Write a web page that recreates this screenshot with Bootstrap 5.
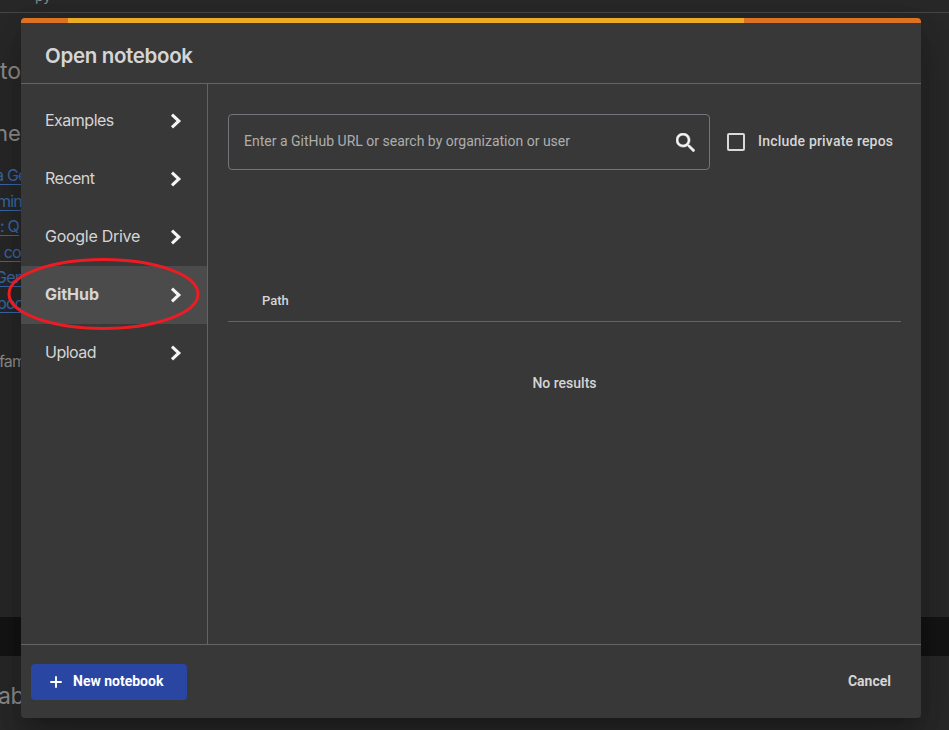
<!DOCTYPE html>
<html lang="en" data-bs-theme="dark">
<head>
<meta charset="utf-8">
<meta name="viewport" content="width=device-width, initial-scale=1">
<title>Open notebook</title>
<link href="https://cdn.jsdelivr.net/npm/bootstrap@5.3.0/dist/css/bootstrap.min.css" rel="stylesheet">
<style>
body{background:#282828;font-family:Roboto,"Liberation Sans",sans-serif;font-size:14px;color:#d5d5d5;height:730px;overflow:hidden}
.g-sans{font-family:Inter,"Open Sans",sans-serif}
/* dimmed page behind the dialog */
.page-behind{width:949px;height:730px;color:#8e8e8e}
.menu-strip{height:13px;border-bottom:1px solid #464646;padding-left:35px;line-height:14px}
.menu-strip span{display:block;margin-top:-11px}
.doc{height:604px}
.doc div,.foot div{white-space:nowrap;width:21px;overflow:hidden}
.doc a{color:#3a68a8;display:block;height:25.6px;line-height:25.6px;font-size:16px;letter-spacing:-.8px;text-decoration:underline;text-underline-offset:3px}
.title-line{font-size:23px;height:34px;line-height:34px;margin-top:41px}
.sub-line{font-size:22px;height:34px;line-height:34px;margin-top:28px;margin-bottom:13px}
.shift-s{text-indent:-3px}
.shift-m{text-indent:-5px}
.para{font-size:16px;line-height:24px;margin-top:32px;letter-spacing:-.8px;text-indent:-1px}
.band{height:39px;background:#141414}
.foot div{font-size:23px;line-height:34px;margin-top:23px;letter-spacing:-.5px;text-indent:-2px}
/* dialog */
.dialog-box{left:21px;top:18px;width:900px;height:700px;background:#383838;border-radius:4px;overflow:hidden}
.dialog-wrap{box-shadow:0 11px 15px -7px rgba(0,0,0,.2),0 24px 38px 3px rgba(0,0,0,.14),0 9px 46px 8px rgba(0,0,0,.12);left:21px;top:18px;width:900px;height:700px;border-radius:4px}
.stripe{height:5px;background:#dc7323}
.stripe i{margin-left:47px;width:676px;background:#edaa25}
.dlg-head{height:61px;border-bottom:1px solid #646464;padding:7px 24px 0}
.dlg-head h1{font-size:20.5px;font-weight:600;letter-spacing:-.33px;color:#d5d5d5}
.dlg-body{height:560px}
.side{width:187px;border-right:1px solid #646464;padding-top:8px}
.side a{height:58px;padding:0 24px;font-size:16px;letter-spacing:-.5px;color:#d5d5d5;text-decoration:none}
.side a.wide{letter-spacing:-.28px}
.side a.current{background:#4b4b4b;font-weight:700;letter-spacing:-.05px}
.side a span{padding-bottom:2px}
.side svg{margin-right:1px}
.main-pane{padding:30px 20px 0}
.search-field{width:482px;height:56px;border:1px solid #73757b;border-radius:4px;padding:0 14px 0 15px;color:#aeaeae}
.search-field span,.tick-label{padding-bottom:2px}
.tick-label{letter-spacing:.2px}
.tick{width:18px;height:18px;border:2px solid #d9d9d9;border-radius:2px;margin:0 13px 0 17px}
.t-head{margin-top:110px;height:42px;padding-left:34px;border-bottom:1px solid #646464;font-size:13px;font-weight:500}
.none{margin-top:51px;font-weight:500;line-height:20px}
.dlg-foot{height:74px;border-top:1px solid #646464;padding:0 30px 0 10px}
.new-btn{width:156px;height:36px;background:#2946a3;border:0;border-radius:4px;color:#fff;font-size:14px;font-weight:700;padding:0 0 0 19px}
.new-btn svg{margin-right:11px}
.ring{left:7px;top:257px}
</style>
<script src="https://cdn.jsdelivr.net/npm/bootstrap@5.3.0/dist/js/bootstrap.bundle.min.js"></script>
</head>
<body>
<div class="page-behind g-sans">
  <div class="menu-strip overflow-hidden"><span>py</span></div>
  <div class="doc overflow-hidden">
    <div class="title-line">to</div>
    <div class="sub-line shift-m">ne</div>
    <div><a href="#" class="shift-m">a Ge</a><a href="#" class="shift-s">mini</a><a href="#">: Q</a><a href="#">&nbsp;co</a><a href="#" class="shift-m">Gen</a><a href="#" class="shift-s">boo</a></div>
    <div class="para">fam</div>
  </div>
  <div class="band"></div>
  <div class="foot"><div>ab</div></div>
</div>

<div class="dialog-wrap position-absolute"></div>
<main class="dialog-box position-absolute d-flex flex-column" role="dialog">
  <div class="stripe d-flex"><i></i></div>
  <header class="dlg-head d-flex align-items-center g-sans"><h1 class="m-0">Open notebook</h1></header>
  <div class="dlg-body d-flex">
    <nav class="side d-flex flex-column g-sans">
      <a href="#" class="d-flex align-items-center justify-content-between"><span>Examples</span><svg width="12" height="16" viewBox="0 0 12 16"><path d="M2 1.7 8.8 8 2 14.3" fill="none" stroke="#f4f4f4" stroke-width="3.1"/></svg></a>
      <a href="#" class="d-flex align-items-center justify-content-between"><span>Recent</span><svg width="12" height="16" viewBox="0 0 12 16"><path d="M2 1.7 8.8 8 2 14.3" fill="none" stroke="#f4f4f4" stroke-width="3.1"/></svg></a>
      <a href="#" class="wide d-flex align-items-center justify-content-between"><span>Google Drive</span><svg width="12" height="16" viewBox="0 0 12 16"><path d="M2 1.7 8.8 8 2 14.3" fill="none" stroke="#f4f4f4" stroke-width="3.1"/></svg></a>
      <a href="#" class="current d-flex align-items-center justify-content-between"><span>GitHub</span><svg width="12" height="16" viewBox="0 0 12 16"><path d="M2 1.7 8.8 8 2 14.3" fill="none" stroke="#f4f4f4" stroke-width="3.1"/></svg></a>
      <a href="#" class="d-flex align-items-center justify-content-between"><span>Upload</span><svg width="12" height="16" viewBox="0 0 12 16"><path d="M2 1.7 8.8 8 2 14.3" fill="none" stroke="#f4f4f4" stroke-width="3.1"/></svg></a>
    </nav>
    <section class="main-pane flex-grow-1">
      <div class="d-flex align-items-center">
        <div class="search-field d-flex align-items-center justify-content-between"><span>Enter a GitHub URL or search by organization or user</span>
          <svg width="19" height="19" viewBox="3 3 17.5 17.5"><path fill="#f4f4f4" stroke="#f4f4f4" stroke-width=".5" d="M15.5 14h-.79l-.28-.27A6.47 6.47 0 0 0 16 9.5 6.5 6.5 0 1 0 9.5 16c1.61 0 3.09-.59 4.23-1.57l.27.28v.79l5 4.99L20.49 19l-4.99-5zm-6 0C7.01 14 5 11.99 5 9.5S7.01 5 9.5 5 14 7.01 14 9.5 11.99 14 9.5 14z"/></svg>
        </div>
        <span class="tick"></span><span class="tick-label fw-medium">Include private repos</span>
      </div>
      <div class="t-head d-flex align-items-center">Path</div>
      <div class="none text-center">No results</div>
    </section>
  </div>
  <footer class="dlg-foot d-flex align-items-center justify-content-between">
    <button class="new-btn btn d-flex align-items-center"><svg width="12" height="12" viewBox="0 0 12 12"><path d="M6 .3v11.4M.3 6h11.4" stroke="#fff" stroke-width="1.9"/></svg><span>New notebook</span></button>
    <span class="fw-bold">Cancel</span>
  </footer>
</main>
<svg class="ring position-absolute" width="194" height="74" viewBox="0 0 194 74"><ellipse cx="96.5" cy="37" rx="94.5" ry="34.5" fill="none" stroke="#ed1c24" stroke-width="3"/></svg>
</body>
</html>
